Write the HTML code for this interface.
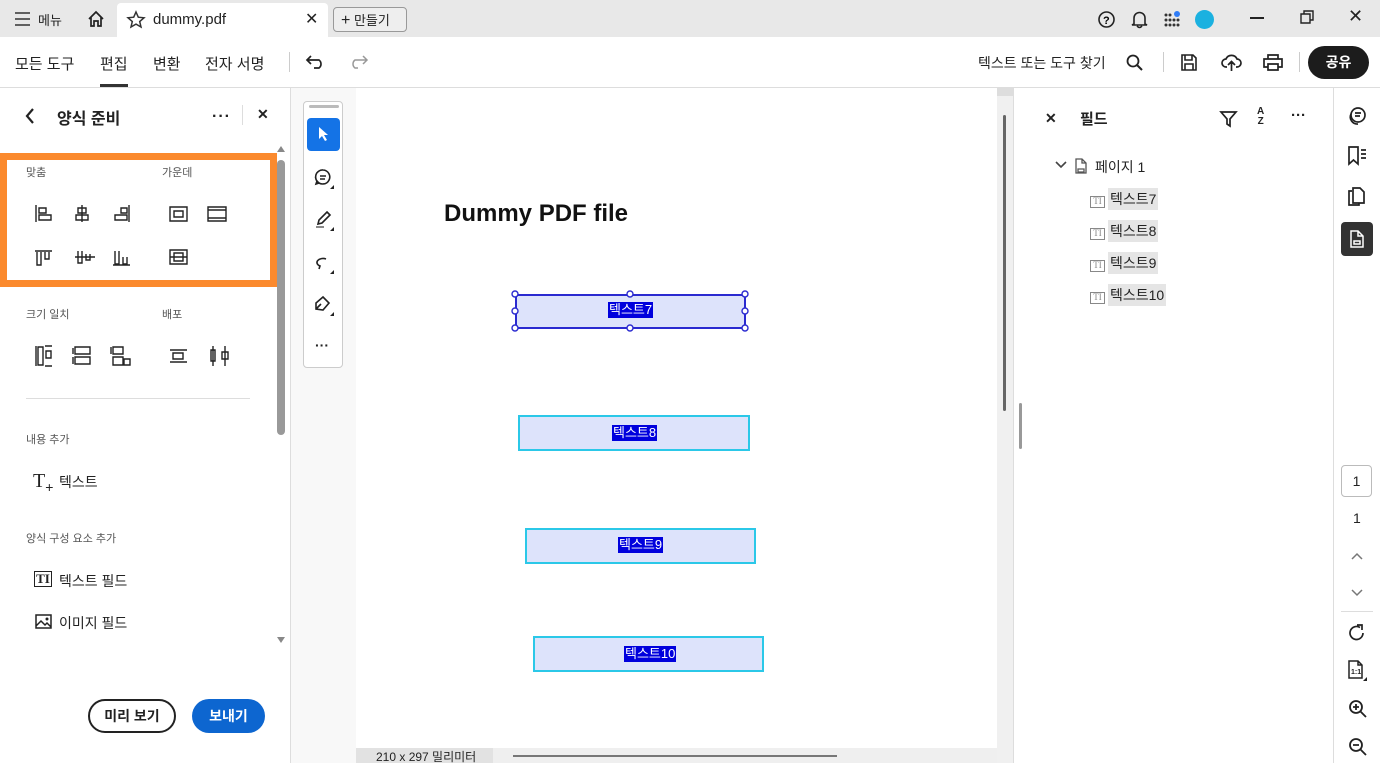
<!DOCTYPE html>
<html><head><meta charset="utf-8"><style>
*{margin:0;padding:0;box-sizing:border-box}
body{width:1380px;height:763px;overflow:hidden;font-family:"Liberation Sans","Noto Sans CJK KR",sans-serif;color:#222;background:#fff;position:relative}
.a{position:absolute}
svg{position:absolute;overflow:visible}
.t{font-size:14px;white-space:nowrap}
.s{font-size:11px;color:#555}
.fld{position:absolute;background:#dde3fb;border:2px solid #2bc8e8}
.lab{position:absolute;background:#0000dd;color:#fff;font-size:13px;line-height:16px;padding:0 1px;white-space:nowrap}
.tree{position:absolute;left:1090px;font-size:14px}
.tree span{background:#e5e5e5;padding:3px 2px}
</style></head><body>
<!-- top bar -->
<div class="a" style="left:0;top:0;width:1380px;height:37px;background:#e8e8e8"></div>
<div class="a" style="left:117px;top:3px;width:211px;height:34px;background:#fff;border-radius:4px 4px 0 0"></div>
<svg style="left:15px;top:12px" width="16" height="14"><path d="M0 1H15M0 7H15M0 13H15" stroke="#333" stroke-width="1.6"/></svg>
<div class="a t" style="left:38px;top:10px;font-size:13px">메뉴</div>
<svg style="left:87px;top:10px" width="18" height="18"><path d="M2 9L9 2L16 9M4 7V16H7V11H11V16H14V7" fill="none" stroke="#222" stroke-width="1.7"/></svg>
<svg style="left:127px;top:11px" width="18" height="17"><path d="M9 1L11.3 6.2L17 6.8L12.7 10.5L14 16L9 13.1L4 16L5.3 10.5L1 6.8L6.7 6.2Z" fill="none" stroke="#333" stroke-width="1.5"/></svg>
<div class="a t" style="left:153px;top:11px;font-size:15px">dummy.pdf</div>
<div class="a" style="left:305px;top:9px;font-size:16px">✕</div>
<div class="a" style="left:333px;top:7px;width:74px;height:25px;border:1px solid #999;border-radius:4px;background:#eee"></div>
<div class="a t" style="left:341px;top:10px;font-size:13px"><b style="font-size:16px;font-weight:normal">+</b> 만들기</div>
<svg style="left:1098px;top:11px" width="17" height="17"><circle cx="8.5" cy="8.5" r="7.5" fill="none" stroke="#222" stroke-width="1.6"/><text x="5" y="13" font-size="11" font-weight="bold" font-family="Liberation Sans">?</text></svg>
<svg style="left:1131px;top:10px" width="17" height="19"><path d="M3 14V8A5.5 5.5 0 0 1 14 8V14L16 15H1Z M6 16Q8.5 19 11 16" fill="none" stroke="#222" stroke-width="1.6"/></svg>
<svg style="left:1163px;top:11px" width="20" height="17"><g fill="#333"><circle cx="3" cy="4" r="1.5"/><circle cx="7" cy="4" r="1.5"/><circle cx="3" cy="9" r="1.5"/><circle cx="7" cy="9" r="1.5"/><circle cx="11" cy="9" r="1.5"/><circle cx="15" cy="9" r="1.5"/><circle cx="3" cy="14" r="1.5"/><circle cx="7" cy="14" r="1.5"/><circle cx="11" cy="14" r="1.5"/><circle cx="15" cy="14" r="1.5"/></g><circle cx="14" cy="3" r="3" fill="#2f7cf6"/></svg>
<div class="a" style="left:1195px;top:10px;width:19px;height:19px;border-radius:50%;background:#1bb1e0"></div>
<div class="a" style="left:1250px;top:17px;width:14px;height:2px;background:#222"></div>
<svg style="left:1300px;top:10px" width="14" height="14"><path d="M1 4H10V13H1Z M4 4V1H13V10H10" fill="none" stroke="#222" stroke-width="1.4"/></svg>
<div class="a" style="left:1348px;top:6px;font-size:18px">✕</div>
<!-- toolbar -->
<div class="a" style="left:0;top:87px;width:1380px;height:1px;background:#ddd"></div>
<div class="a t" style="left:15px;top:53px;font-size:15px">모든 도구</div>
<div class="a t" style="left:100px;top:53px;font-size:15px">편집</div>
<div class="a" style="left:100px;top:84px;width:28px;height:3px;background:#333"></div>
<div class="a t" style="left:153px;top:53px;font-size:15px">변환</div>
<div class="a t" style="left:205px;top:53px;font-size:15px">전자 서명</div>
<div class="a" style="left:289px;top:52px;width:1px;height:20px;background:#ccc"></div>
<svg style="left:306px;top:55px" width="20" height="14"><path d="M5 1L1 5L5 9M1 5H13A5 5 0 0 1 13 13H8" fill="none" stroke="#222" stroke-width="1.7"/></svg>
<svg style="left:348px;top:55px" width="20" height="14"><path d="M15 1L19 5L15 9M19 5H7A5 5 0 0 0 7 13H10" fill="none" stroke="#999" stroke-width="1.5"/></svg>
<div class="a t" style="left:978px;top:53px;font-size:14px">텍스트 또는 도구 찾기</div>
<svg style="left:1126px;top:54px" width="18" height="18"><circle cx="7" cy="7" r="5.5" fill="none" stroke="#222" stroke-width="1.8"/><path d="M11 11L16 16" stroke="#222" stroke-width="2"/></svg>
<div class="a" style="left:1163px;top:52px;width:1px;height:20px;background:#ccc"></div>
<svg style="left:1181px;top:54px" width="16" height="17"><path d="M1 1H12L15 4V16H1Z M4 1V6H11V1 M4 16V10H12V16" fill="none" stroke="#222" stroke-width="1.6"/></svg>
<svg style="left:1221px;top:53px" width="21" height="19"><path d="M6 14H5A4 4 0 0 1 5 6A6 6 0 0 1 16 6A4 4 0 0 1 16 14H15 M10.5 18V9M7 12L10.5 8.5L14 12" fill="none" stroke="#222" stroke-width="1.7"/></svg>
<svg style="left:1263px;top:54px" width="20" height="17"><path d="M5 5V1H15V5 M5 13H1V5H19V13H15 M5 10H15V16H5Z" fill="none" stroke="#222" stroke-width="1.7"/></svg>
<div class="a" style="left:1299px;top:52px;width:1px;height:20px;background:#ccc"></div>
<div class="a" style="left:1308px;top:46px;width:61px;height:33px;border-radius:17px;background:#1c1c1c;color:#fff;font-size:14px;font-weight:bold;text-align:center;line-height:33px">공유</div>
<!-- left panel -->
<div class="a" style="left:290px;top:88px;width:1px;height:675px;background:#ddd"></div>
<svg style="left:25px;top:108px" width="10" height="16"><path d="M8 1L2 8L8 15" fill="none" stroke="#222" stroke-width="2.2"/></svg>
<div class="a t" style="left:57px;top:105px;font-size:16px;font-weight:bold">양식 준비</div>
<div class="a" style="left:212px;top:108px;font-size:16px;font-weight:bold;letter-spacing:1px">···</div>
<div class="a" style="left:242px;top:105px;width:1px;height:20px;background:#ddd"></div>
<div class="a" style="left:257px;top:106px;font-size:14px;font-weight:bold">✕</div>
<div class="a" style="left:0;top:153px;width:277px;height:134px;border:7px solid #fb8a2e"></div>
<div class="a s" style="left:26px;top:164px">맞춤</div>
<div class="a s" style="left:162px;top:164px">가운데</div>
<svg style="left:35px;top:205px" width="200" height="60" fill="none" stroke="#222" stroke-width="1.4">
<path d="M1 0V17M4 3H11V8H4ZM4 10H16V15H4Z"/>
<path d="M47 0V17M43 3H51V8H43ZM41 10H53V15H41Z"/>
<path d="M94 0V17M86 3H92V8H86ZM80 10H92V15H80Z"/>
<path d="M135 2H152V16H135ZM139 6H148V12H139Z"/>
<path d="M173 2H191V16H173ZM173 5H191V13H173Z"/>
<path d="M0 46H17M2 47V60H6V47M10 47V54H14V47"/>
<path d="M40 52H60M43 46V58H47V46M51 49V55H55V49"/>
<path d="M78 60H95M80 46V59H84V46M88 52V59H92V52"/>
<path d="M135 45H152V59H135ZM139 48H148V56H139ZM135 52H152"/>
</svg>
<div class="a s" style="left:26px;top:306px">크기 일치</div>
<div class="a s" style="left:162px;top:306px">배포</div>
<svg style="left:35px;top:346px" width="200" height="22" fill="none" stroke="#222" stroke-width="1.4">
<path d="M1 0V20M3 1H8V19H3ZM11 5H16V12H11ZM10 20H17M10 0H17"/>
<path d="M38 2V8M40 1H55V8H40ZM38 11V18M40 11H55V18H40Z"/>
<path d="M76 1V8M78 1H88V8H78ZM78 11H88V19H78ZM89 13H95V19H89Z"/>
<path d="M135 4H152M135 16H152M138 7H148V13H138Z"/>
<path d="M178 0V20M190 0V20M176 4H180V15H176ZM187 6H193V13H187Z"/>
</svg>
<div class="a" style="left:26px;top:398px;width:224px;height:1px;background:#ddd"></div>
<div class="a s" style="left:26px;top:431px">내용 추가</div>
<div class="a" style="left:33px;top:470px;font-family:'Liberation Serif';font-size:20px">T<span style="font-family:'Liberation Sans';font-size:14px;vertical-align:-5px">+</span></div>
<div class="a t" style="left:59px;top:472px">텍스트</div>
<div class="a s" style="left:26px;top:530px">양식 구성 요소 추가</div>
<div class="a" style="left:34px;top:571px;width:18px;height:16px;border:1.6px solid #222;font-family:'Liberation Serif';font-size:13px;line-height:13px;text-align:center;font-weight:bold">TI</div>
<div class="a t" style="left:59px;top:571px">텍스트 필드</div>
<svg style="left:35px;top:614px" width="17" height="15"><path d="M1 1H16V14H1Z M1 12L6 7L10 11L12 9L16 13" fill="none" stroke="#222" stroke-width="1.5"/><circle cx="12" cy="5" r="1.5" fill="#222"/></svg>
<div class="a t" style="left:59px;top:613px">이미지 필드</div>
<div class="a" style="left:277px;top:160px;width:8px;height:275px;background:#999;border-radius:4px"></div>
<div class="a" style="left:277px;top:146px;width:0;height:0;border:4px solid transparent;border-bottom:6px solid #888;border-top:0"></div>
<div class="a" style="left:277px;top:637px;width:0;height:0;border:4px solid transparent;border-top:6px solid #888;border-bottom:0"></div>
<div class="a" style="left:88px;top:699px;width:88px;height:34px;border:2px solid #222;border-radius:17px;text-align:center;line-height:30px;font-size:14px;font-weight:bold">미리 보기</div>
<div class="a" style="left:192px;top:699px;width:73px;height:34px;border-radius:17px;background:#0d66d0;color:#fff;text-align:center;line-height:34px;font-size:14px;font-weight:bold">보내기</div>
<!-- tool column -->
<div class="a" style="left:291px;top:88px;width:65px;height:675px;background:#f8f8f8"></div>
<div class="a" style="left:303px;top:101px;width:40px;height:267px;background:#fff;border:1px solid #ccc;border-radius:4px"></div>
<div class="a" style="left:309px;top:105px;width:30px;height:3px;background:#bbb;border-radius:2px"></div>
<div class="a" style="left:307px;top:118px;width:33px;height:33px;background:#1473e6;border-radius:4px"></div>
<svg style="left:318px;top:126px" width="12" height="16"><path d="M1 1V13L4 10L7 15L9 14L6 9H10Z" fill="#fff"/></svg>
<svg style="left:314px;top:168px" width="24" height="24" fill="none" stroke="#222" stroke-width="1.6"><path d="M9 2A7 7 0 1 1 3 13L2 16L5 15A7 7 0 0 1 9 2ZM6 8H12M6 11H11"/><path d="M20 17V21H16Z" fill="#222" stroke="none"/></svg>
<svg style="left:314px;top:210px" width="24" height="24" fill="none" stroke="#222" stroke-width="1.6"><path d="M13 2L16 5L8 13L4 14L5 10Z"/><path d="M2 17H10" stroke="#888" stroke-width="2"/><path d="M20 17V21H16Z" fill="#222" stroke="none"/></svg>
<svg style="left:314px;top:253px" width="24" height="24" fill="none" stroke="#222" stroke-width="1.6"><path d="M12 6A6 4 0 1 0 6 13L5 16"/><path d="M20 17V21H16Z" fill="#222" stroke="none"/></svg>
<svg style="left:314px;top:295px" width="24" height="24" fill="none" stroke="#222" stroke-width="1.6"><path d="M9 2L15 8L9 15L2 14L2 8Z M2 14L7 9"/><path d="M20 17V21H16Z" fill="#222" stroke="none"/></svg>
<div class="a" style="left:315px;top:337px;font-size:14px;font-weight:bold">···</div>
<!-- document -->
<div class="a" style="left:356px;top:88px;width:641px;height:660px;background:#fff"></div>
<div class="a" style="left:997px;top:88px;width:16px;height:675px;background:#f0f0f0"></div>
<div class="a" style="left:1003px;top:115px;width:3px;height:296px;background:#666;border-radius:2px"></div>
<div class="a" style="left:997px;top:88px;width:16px;height:8px;background:#ddd"></div>
<div class="a" style="left:1019px;top:403px;width:3px;height:46px;background:#999;border-radius:2px"></div>
<div class="a" style="left:356px;top:748px;width:641px;height:15px;background:#efefef"></div>
<div class="a" style="left:356px;top:748px;width:137px;height:15px;background:#e2e2e2"></div>
<div class="a" style="left:376px;top:748px;font-size:12px;color:#222">210 x 297 밀리미터</div>
<div class="a" style="left:513px;top:755px;width:324px;height:2px;background:#777"></div>
<div class="a" style="left:444px;top:200px;font-size:24px;font-weight:bold;color:#111">Dummy PDF file</div>
<div class="fld" style="left:515px;top:294px;width:231px;height:35px;border-color:#2a2ad0"></div>
<svg style="left:515px;top:294px" width="231" height="35" fill="#fff" stroke="#2a2ad0" stroke-width="1.4"><circle cx="0" cy="0" r="3"/><circle cx="115" cy="0" r="3"/><circle cx="230" cy="0" r="3"/><circle cx="0" cy="17" r="3"/><circle cx="230" cy="17" r="3"/><circle cx="0" cy="34" r="3"/><circle cx="115" cy="34" r="3"/><circle cx="230" cy="34" r="3"/></svg>
<div class="lab" style="left:608px;top:302px">텍스트7</div>
<div class="fld" style="left:518px;top:415px;width:232px;height:36px"></div>
<div class="lab" style="left:612px;top:425px">텍스트8</div>
<div class="fld" style="left:525px;top:528px;width:231px;height:36px"></div>
<div class="lab" style="left:618px;top:537px">텍스트9</div>
<div class="fld" style="left:533px;top:636px;width:231px;height:36px"></div>
<div class="lab" style="left:624px;top:646px">텍스트10</div>
<!-- right panel -->
<div class="a" style="left:1013px;top:88px;width:1px;height:675px;background:#ddd"></div>
<div class="a" style="left:1045px;top:110px;font-size:14px;font-weight:bold">✕</div>
<div class="a t" style="left:1080px;top:108px;font-size:15px;font-weight:bold">필드</div>
<svg style="left:1220px;top:111px" width="17" height="17"><path d="M1 1H16L10 8V15L7 13V8Z" fill="none" stroke="#222" stroke-width="1.7"/></svg>
<div class="a" style="left:1257px;top:107px;font-size:10px;font-weight:bold;line-height:10px;text-align:center">A<br>Z</div>
<div class="a" style="left:1291px;top:107px;font-size:15px;font-weight:bold">···</div>
<svg style="left:1055px;top:161px" width="12" height="8"><path d="M1 1L6 6L11 1" fill="none" stroke="#444" stroke-width="1.6"/></svg>
<svg style="left:1075px;top:158px" width="12" height="16"><path d="M1 1H7L11 5V15H1Z M7 1V5H11 M3 11H9V14H3Z" fill="none" stroke="#555" stroke-width="1.3"/></svg>
<div class="a t" style="left:1095px;top:157px">페이지 1</div>
<div class="tree" style="top:189px"><b style="font-weight:normal;display:inline-block;width:15px;height:12px;border:1.4px solid #888;font-size:9px;line-height:9px;text-align:center;color:#888;font-family:'Liberation Serif';margin-right:3px">TI</b><span>텍스트7</span></div>
<div class="tree" style="top:221px"><b style="font-weight:normal;display:inline-block;width:15px;height:12px;border:1.4px solid #888;font-size:9px;line-height:9px;text-align:center;color:#888;font-family:'Liberation Serif';margin-right:3px">TI</b><span>텍스트8</span></div>
<div class="tree" style="top:253px"><b style="font-weight:normal;display:inline-block;width:15px;height:12px;border:1.4px solid #888;font-size:9px;line-height:9px;text-align:center;color:#888;font-family:'Liberation Serif';margin-right:3px">TI</b><span>텍스트9</span></div>
<div class="tree" style="top:285px"><b style="font-weight:normal;display:inline-block;width:15px;height:12px;border:1.4px solid #888;font-size:9px;line-height:9px;text-align:center;color:#888;font-family:'Liberation Serif';margin-right:3px">TI</b><span>텍스트10</span></div>
<!-- right rail -->
<div class="a" style="left:1333px;top:88px;width:1px;height:675px;background:#ddd"></div>
<svg style="left:1347px;top:106px" width="20" height="20" fill="none" stroke="#222" stroke-width="1.7"><circle cx="11" cy="9" r="7"/><path d="M8 7H14M8 10H13M4 8A7 7 0 0 0 11 18"/></svg>
<svg style="left:1348px;top:146px" width="20" height="20" fill="none" stroke="#222" stroke-width="1.7"><path d="M1 1H10V18L5.5 14L1 18Z M13 4H18M13 8H18M13 12H18"/></svg>
<svg style="left:1348px;top:187px" width="18" height="20" fill="none" stroke="#222" stroke-width="1.7"><path d="M4 4H1V18H11V16 M5 1H12L16 5V16H5Z"/></svg>
<div class="a" style="left:1341px;top:222px;width:32px;height:34px;background:#333;border-radius:4px"></div>
<svg style="left:1350px;top:230px" width="14" height="18" fill="none" stroke="#fff" stroke-width="1.5"><path d="M1 1H8L13 6V17H1Z M8 1V6H13 M4 11H10V14H4Z"/></svg>
<div class="a" style="left:1341px;top:465px;width:31px;height:32px;border:1px solid #bbb;border-radius:4px;text-align:center;line-height:30px;font-size:14px">1</div>
<div class="a" style="left:1353px;top:510px;font-size:14px">1</div>
<svg style="left:1351px;top:552px" width="12" height="8"><path d="M1 7L6 2L11 7" fill="none" stroke="#777" stroke-width="1.5"/></svg>
<svg style="left:1351px;top:589px" width="12" height="8"><path d="M1 1L6 6L11 1" fill="none" stroke="#777" stroke-width="1.5"/></svg>
<div class="a" style="left:1341px;top:611px;width:32px;height:1px;background:#ddd"></div>
<svg style="left:1348px;top:624px" width="18" height="18"><path d="M15 9A6.5 6.5 0 1 1 12 3.5M9 1H14V6" fill="none" stroke="#222" stroke-width="1.7"/></svg>
<svg style="left:1348px;top:660px" width="20" height="22" fill="none" stroke="#222" stroke-width="1.5"><path d="M1 1H10L14 5V18H1Z M10 1V5H14"/><text x="3" y="14" font-size="7" font-weight="bold" fill="#222" stroke="none" font-family="Liberation Sans">1:1</text><path d="M19 17V21H15Z" fill="#222" stroke="none"/></svg>
<svg style="left:1348px;top:699px" width="20" height="20" fill="none" stroke="#222" stroke-width="1.8"><circle cx="8" cy="8" r="6"/><path d="M12.5 12.5L18 18M5 8H11M8 5V11"/></svg>
<svg style="left:1348px;top:737px" width="20" height="20" fill="none" stroke="#222" stroke-width="1.8"><circle cx="8" cy="8" r="6"/><path d="M12.5 12.5L18 18M5 8H11"/></svg>
</body></html>
